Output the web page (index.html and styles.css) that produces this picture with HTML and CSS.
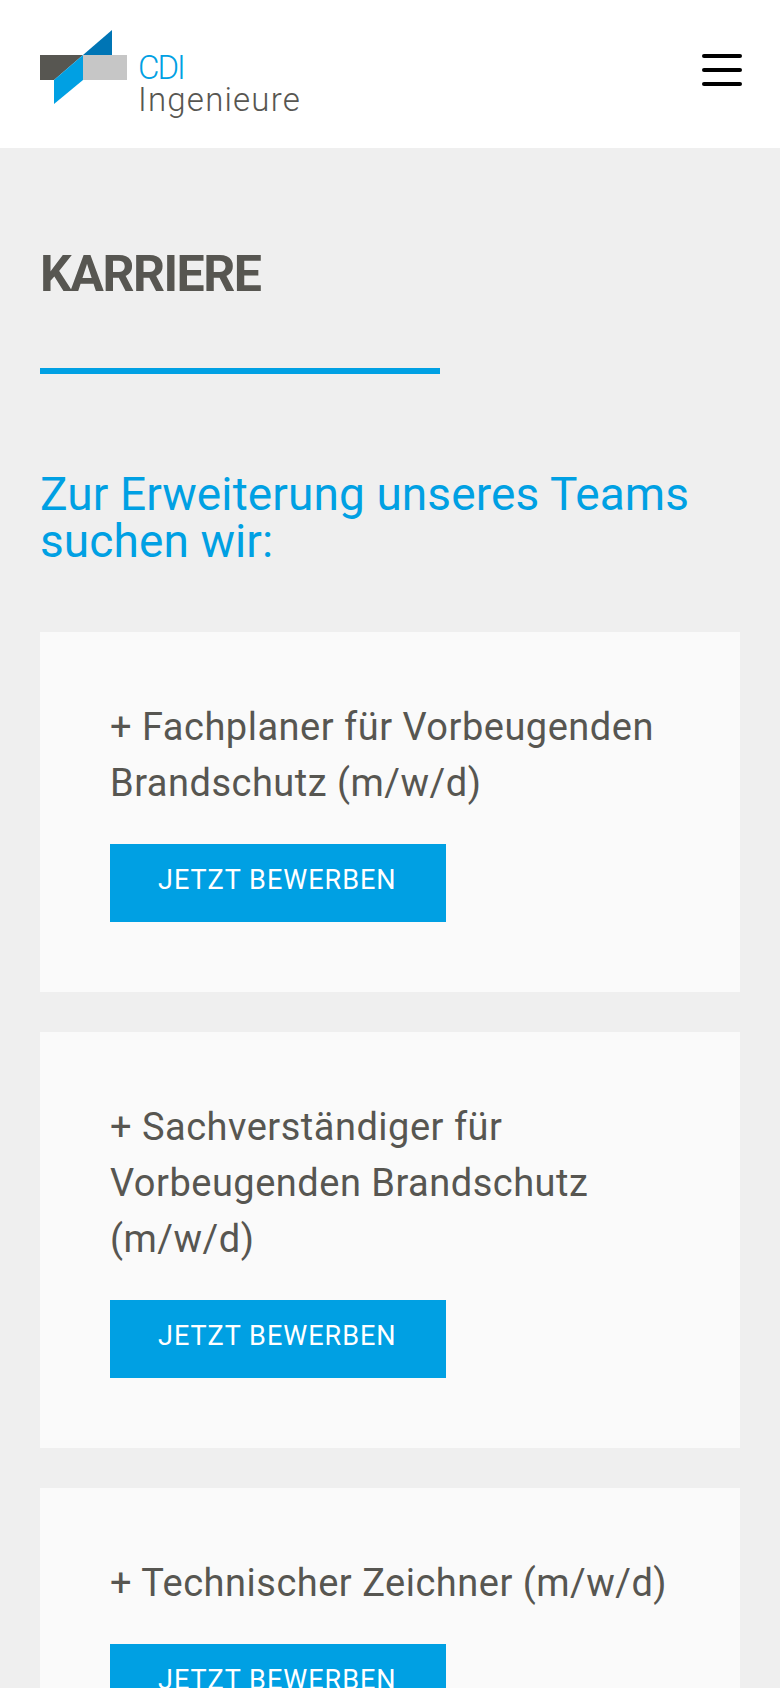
FILE: index.html
```html
<!DOCTYPE html>
<html lang="de">
<head>
  <meta charset="UTF-8" />
  <meta name="viewport" content="width=device-width,initial-scale=1.0" />
  <title>Karriere - CDI Ingenieure</title>
  <link rel="stylesheet" href="styles.css">
</head>
<body>

  <header class="site_header">
    <a class="logo" href="#">
      <svg class="logo_mark" width="88" height="76" viewBox="0 0 88 76">
        <polygon points="0,25 43,25 14,50 0,50" fill="#575651"></polygon>
        <rect x="43" y="25" width="44" height="25" fill="#c6c6c6"></rect>
        <polygon points="43,25 72,0 72,25" fill="#0075b5"></polygon>
        <polygon points="43,25 43,50 14,74 14,50" fill="#00a0e3"></polygon>
      </svg>
      <span class="logo_text">
        <span class="logo_cdi">CDI</span>
        <span class="logo_name">Ingenieure</span>
      </span>
    </a>
    <button class="menu_button" aria-label="Menü">
      <span></span>
      <span></span>
      <span></span>
    </button>
  </header>

  <main class="content">
    <h1 class="page_title">KARRIERE</h1>
    <div class="title_rule"></div>
    <h2 class="lead">Zur Erweiterung unseres Teams suchen wir:</h2>

    <section class="job_card">
      <h3 class="job_title">+ Fachplaner für Vorbeugenden Brandschutz (m/w/d)</h3>
      <a class="apply_button" href="#">JETZT BEWERBEN</a>
    </section>

    <section class="job_card">
      <h3 class="job_title">+ Sachverständiger für Vorbeugenden Brandschutz (m/w/d)</h3>
      <a class="apply_button" href="#">JETZT BEWERBEN</a>
    </section>

    <section class="job_card">
      <h3 class="job_title">+ Technischer Zeichner (m/w/d)</h3>
      <a class="apply_button" href="#">JETZT BEWERBEN</a>
    </section>
  </main>

</body>
</html>
```

FILE: styles.css
```css
html, body {
  margin: 0;
  padding: 0;
  height: 1688px;
  overflow: hidden;
}

body {
  background: #efefef;
  color: #575651;
  font-family: "Roboto", sans-serif;
}

/* header */

.site_header {
  height: 148px;
  background: #fff;
  display: flex;
  align-items: flex-start;
  justify-content: space-between;
  padding: 0 38px 0 40px;
}

.logo {
  display: flex;
  text-decoration: none;
  margin-top: 30px;
}

.logo_mark {
  display: block;
  margin-right: 10px;
}

.logo_text {
  display: flex;
  flex-direction: column;
  margin-top: 23px;
  font-weight: 300;
}

.logo_cdi {
  color: #00a0e3;
  font-size: 33px;
  line-height: 30px;
  letter-spacing: -2px;
}

.logo_name {
  color: #575651;
  font-size: 33px;
  line-height: 34px;
  letter-spacing: 1.2px;
}

.menu_button {
  width: 40px;
  margin-top: 54px;
  padding: 0;
  border: none;
  background: none;
  display: flex;
  flex-direction: column;
  gap: 10px;
}

.menu_button span {
  display: block;
  height: 4px;
  border-radius: 2px;
  background: #000;
}

/* content */

.content {
  padding: 0 40px;
}

.page_title {
  margin: 96px 0 0;
  font-size: 50px;
  line-height: 60px;
  font-weight: bold;
  letter-spacing: -1.5px;
}

.title_rule {
  width: 400px;
  height: 6px;
  margin-top: 64px;
  background: #00a0e3;
}

.lead {
  margin: 97px 0 0;
  color: #00a0e3;
  font-size: 46px;
  line-height: 47px;
  font-weight: normal;
  letter-spacing: 0.1px;
}

.job_card {
  margin-top: 40px;
  padding: 67px 70px 70px;
  background: #fafafa;
}

.lead + .job_card {
  margin-top: 67px;
}

.job_title {
  margin: 0;
  font-size: 38px;
  line-height: 56px;
  font-weight: normal;
  letter-spacing: 0.5px;
}

.apply_button {
  display: block;
  width: 336px;
  box-sizing: border-box;
  margin-top: 33px;
  padding: 20px 0 0 48px;
  height: 78px;
  background: #00a0e3;
  color: #fff;
  font-size: 27px;
  line-height: 32px;
  letter-spacing: 1px;
  text-decoration: none;
}
```
